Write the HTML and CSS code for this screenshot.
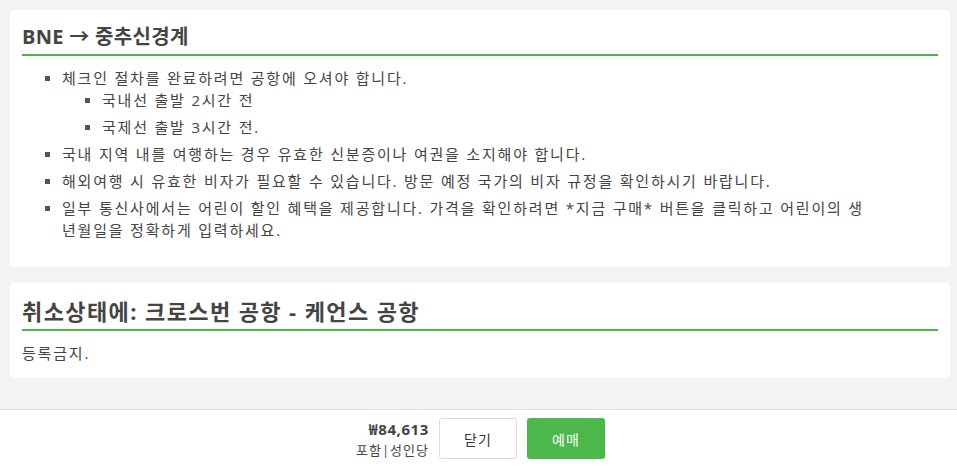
FILE: index.html
```html
<!DOCTYPE html>
<html lang="ko">
<head>
	<meta charset="utf-8">
	<title>BNE → 중추신경계</title>
	<link rel="stylesheet" href="styles.css">
</head>
<body>
	<div class="content">
		<div class="card">
			<h2 class="card_title">BNE → 중추신경계</h2>
			<ul class="notes">
				<li>체크인 절차를 완료하려면 공항에 오셔야 합니다.
					<ul>
						<li>국내선 출발 2시간 전</li>
						<li>국제선 출발 3시간 전.</li>
					</ul>
				</li>
				<li>국내 지역 내를 여행하는 경우 유효한 신분증이나 여권을 소지해야 합니다.</li>
				<li>해외여행 시 유효한 비자가 필요할 수 있습니다. 방문 예정 국가의 비자 규정을 확인하시기 바랍니다.</li>
				<li>일부 통신사에서는 어린이 할인 혜택을 제공합니다. 가격을 확인하려면 *지금 구매* 버튼을 클릭하고 어린이의 생년월일을 정확하게 입력하세요.</li>
			</ul>
		</div>

		<div class="card">
			<h2 class="card_title big">취소상태에: 크로스번 공항 - 케언스 공항</h2>
			<p class="card_text">등록금지.</p>
		</div>
	</div>

	<div class="footer">
		<div class="price">
			<div class="price_value">₩84,613</div>
			<div class="price_note">포함|성인당</div>
		</div>
		<button class="btn btn_close">닫기</button>
		<button class="btn btn_book">예매</button>
	</div>
</body>
</html>
```

FILE: styles.css
```css
html, body {
	height: 100%;
}

body {
	margin: 0;
	display: flex;
	flex-direction: column;
	background-color: #f3f3f3;
	color: #444;
	font-family: "Open Sans", "Noto Sans CJK KR", sans-serif;
	font-size: 15px;
	letter-spacing: 1.8px;
}

.content {
	flex: 1;
	padding: 10px 7px 0 10px;
}

.card {
	background-color: #fff;
	border-radius: 4px;
	padding: 12px 12px 12px 12px;
	margin-bottom: 16px;
}

.card_title {
	margin: 0;
	padding-bottom: 2px;
	border-bottom: 2px solid #4cb64c;
	font-size: 20px;
	line-height: 30px;
	font-weight: bold;
	letter-spacing: 0.3px;
	color: #444;
}

.card_title.big {
	font-size: 22px;
	line-height: 32px;
	letter-spacing: 1.4px;
}

.notes {
	margin: 11px 0 14px;
	padding: 0 72px 0 40px;
	list-style: none;
	line-height: 22px;
}

.notes ul {
	margin: 0;
	padding-left: 40px;
	list-style: none;
}

.notes li {
	position: relative;
}

.notes li + li {
	margin-top: 5px;
}

.notes li::before {
	content: "";
	position: absolute;
	left: -17px;
	top: 9px;
	width: 5px;
	height: 5px;
	background-color: #555;
}

.card_text {
	margin: 11px 0 2px;
	line-height: 22px;
}

.footer {
	display: flex;
	justify-content: center;
	align-items: flex-start;
	gap: 10px;
	height: 50px;
	padding-top: 8px;
	padding-left: 4px;
	background-color: #fff;
	border-top: 1px solid #e3e3e3;
	letter-spacing: 0.6px;
}

.price {
	text-align: right;
	padding-top: 1px;
}

.price_value {
	font-weight: bold;
	font-size: 15px;
	line-height: 20px;
}

.price_note {
	font-size: 13px;
	line-height: 22px;
	letter-spacing: 1px;
}

.btn {
	width: 78px;
	height: 41px;
	border-radius: 3px;
	font-family: "Open Sans", "Noto Sans CJK KR", sans-serif;
	font-size: 14px;
	letter-spacing: 1px;
	cursor: pointer;
}

.btn_close {
	background-color: #fff;
	border: 1px solid #ddd;
	color: #333;
}

.btn_book {
	background-color: #4cb84c;
	border: none;
	color: #fff;
}
```
